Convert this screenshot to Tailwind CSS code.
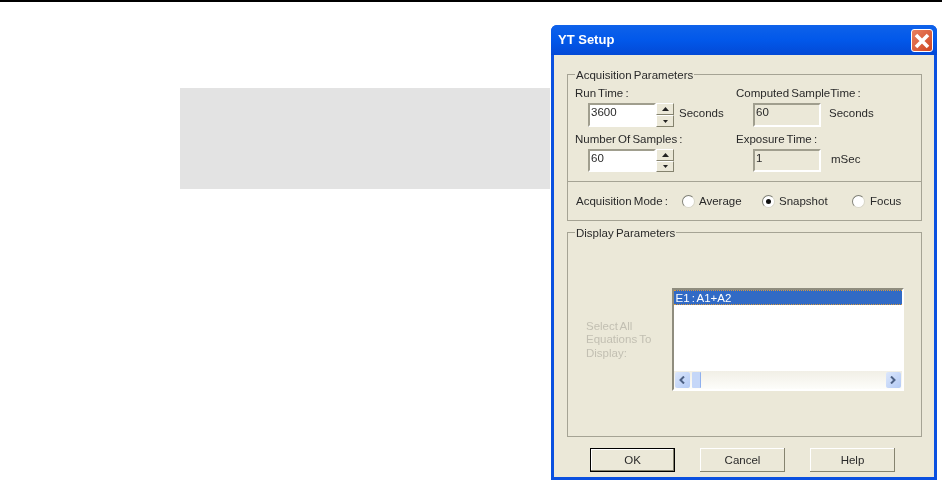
<!DOCTYPE html>
<html lang="en">

<head>
    <meta charset="UTF-8">
    <meta name="viewport" content="width=device-width, initial-scale=1.0">
    <title>YT Setup</title>
    <script src="https://cdn.jsdelivr.net/npm/@tailwindcss/browser@4"></script>
</head>

<body class="bg-white w-[942px] h-[481px] overflow-hidden font-['Liberation_Sans',Arial,sans-serif] text-[11.5px] leading-[14px] text-[#2a2a2a] [word-spacing:-1px]">
    <div class="h-[2px] bg-black"></div>

    <div class="flex">
        <!-- page column with the grey note box -->
        <div class="w-[551px] pl-[180px] pt-[86px]">
            <div class="w-[370px] h-[101px] bg-[#e3e3e3]"></div>
        </div>

        <!-- dialog -->
        <div class="w-[386px] h-[455px] mt-[23px] flex flex-col rounded-t-[6px] overflow-hidden bg-[#0a50e0] blur-[0.4px]">
            <div class="h-[30px] shrink-0 flex items-center justify-between pl-[7px] pr-[4px] bg-gradient-to-b from-[#0f62ea] via-[#0258ea] to-[#0349d6]">
                <span class="font-bold text-[13px] text-white [word-spacing:0]">YT Setup</span>
                <div class="w-[22px] h-[23px] mt-[1px] flex items-center justify-center rounded-[3px] border border-white bg-gradient-to-br from-[#e8805f] to-[#cf4420]">
                    <svg width="18" height="18" viewBox="0 0 18 18">
                        <path d="M3 3 L15 15 M15 3 L3 15" stroke="#fff" stroke-width="3.6" fill="none" />
                    </svg>
                </div>
            </div>

            <div class="flex-1 mx-[3px] mb-[3px] bg-[#ebe8d8] pl-[13px] pt-[19px]">
                <!-- Acquisition Parameters -->
                <div class="relative w-[355px] h-[147px] border border-[#a5a394]">
                    <span class="absolute -top-[7px] left-[7px] px-[1px] bg-[#ebe8d8]">Acquisition Parameters</span>

                    <div class="h-[107px] pl-[7px] pt-[11px] grid grid-cols-[161px_1fr] border-b border-[#a5a394]">
                        <div>
                            <div>Run Time :</div>
                            <div class="flex items-center mt-[3px] ml-[13px]">
                                <div class="w-[68px] h-[24px] pl-[1px] bg-white border-2 border-[#a09e8e] border-r-white border-b-white">3600</div>
                                <div class="w-[18px] h-[24px] flex flex-col">
                                    <div class="h-[12px] flex items-center justify-center bg-[#ebe8d8] border border-[#fff] border-r-[#85836f] border-b-[#85836f]">
                                        <svg width="7" height="4" viewBox="0 0 7 4"><path d="M3.5 0 L7 4 H0 Z" fill="#222" /></svg>
                                    </div>
                                    <div class="h-[12px] flex items-center justify-center bg-[#ebe8d8] border border-[#fff] border-r-[#85836f] border-b-[#85836f]">
                                        <svg width="5" height="3" viewBox="0 0 5 3"><path d="M0 0 H5 L2.5 3 Z" fill="#222" /></svg>
                                    </div>
                                </div>
                                <span class="ml-[5px] mb-[4px]">Seconds</span>
                            </div>
                            <div class="mt-[5px]">Number Of Samples :</div>
                            <div class="flex items-center mt-[3px] ml-[13px]">
                                <div class="w-[68px] h-[23px] pl-[1px] bg-white border-2 border-[#a09e8e] border-r-white border-b-white">60</div>
                                <div class="w-[18px] h-[23px] flex flex-col">
                                    <div class="h-[12px] flex items-center justify-center bg-[#ebe8d8] border border-[#fff] border-r-[#85836f] border-b-[#85836f]">
                                        <svg width="7" height="4" viewBox="0 0 7 4"><path d="M3.5 0 L7 4 H0 Z" fill="#222" /></svg>
                                    </div>
                                    <div class="h-[11px] flex items-center justify-center bg-[#ebe8d8] border border-[#fff] border-r-[#85836f] border-b-[#85836f]">
                                        <svg width="5" height="3" viewBox="0 0 5 3"><path d="M0 0 H5 L2.5 3 Z" fill="#222" /></svg>
                                    </div>
                                </div>
                            </div>
                        </div>
                        <div>
                            <div>Computed SampleTime :</div>
                            <div class="flex items-center mt-[3px] ml-[17px]">
                                <div class="w-[68px] h-[24px] pl-[1px] border-2 border-[#a09e8e] border-r-white border-b-white">60</div>
                                <span class="ml-[8px] mb-[4px]">Seconds</span>
                            </div>
                            <div class="mt-[5px]">Exposure Time :</div>
                            <div class="flex items-center mt-[3px] ml-[17px]">
                                <div class="w-[68px] h-[23px] pl-[1px] border-2 border-[#a09e8e] border-r-white border-b-white">1</div>
                                <span class="ml-[10px] mb-[4px]">mSec</span>
                            </div>
                        </div>
                    </div>

                    <div class="h-[38px] pl-[8px] flex items-center">
                        <span class="w-[106px]">Acquisition Mode :</span>
                        <label class="w-[80px] flex items-center gap-[4px]">
                            <span class="w-[13px] h-[13px] rounded-full bg-white border border-[#7f7f75] border-r-[#d8d6c8] border-b-[#d8d6c8]"></span>
                            Average
                        </label>
                        <label class="w-[90px] flex items-center gap-[4px]">
                            <span class="w-[13px] h-[13px] rounded-full bg-white border border-[#7f7f75] border-r-[#d8d6c8] border-b-[#d8d6c8] flex items-center justify-center">
                                <span class="w-[5px] h-[5px] rounded-full bg-[#111]"></span>
                            </span>
                            Snapshot
                        </label>
                        <label class="flex items-center gap-[5px]">
                            <span class="w-[13px] h-[13px] rounded-full bg-white border border-[#7f7f75] border-r-[#d8d6c8] border-b-[#d8d6c8]"></span>
                            Focus
                        </label>
                    </div>
                </div>

                <!-- Display Parameters -->
                <div class="relative w-[355px] h-[205px] mt-[11px] border border-[#a5a394] pl-[18px] pt-[55px]">
                    <span class="absolute -top-[7px] left-[7px] px-[1px] bg-[#ebe8d8]">Display Parameters</span>
                    <div class="flex items-center">
                        <div class="w-[85.5px] pt-[1px] text-[#c2bfb2] leading-[13.5px]">Select All<br>Equations To<br>Display:</div>
                        <div class="w-[232px] h-[103px] flex flex-col bg-white border-2 border-[#8f8d7e] border-r-white border-b-white">
                            <div class="h-[15px] pl-[2px] flex items-center bg-[#316ac5] text-white border-y border-dotted border-[#d9993a]">E1 : A1+A2</div>
                            <div class="flex-1"></div>
                            <div class="h-[18px] flex items-center justify-between pl-[1px] pr-[1px] bg-gradient-to-b from-[#f1efe6] to-[#fdfdfa]">
                                <div class="flex items-center gap-[2px]">
                                    <div class="w-[15px] h-[16px] flex items-center justify-center rounded-[2px] bg-gradient-to-br from-[#dce7fb] to-[#b3caf5]">
                                        <svg width="6" height="8" viewBox="0 0 6 8"><path d="M5 0.5 L1.5 4 L5 7.5" stroke="#4d6185" stroke-width="2" fill="none" /></svg>
                                    </div>
                                    <div class="w-[9px] h-[16px] rounded-[1px] bg-[#c5d7f8] border-r border-[#8fb0ee]"></div>
                                </div>
                                <div class="w-[15px] h-[16px] flex items-center justify-center rounded-[2px] bg-gradient-to-br from-[#dce7fb] to-[#b3caf5]">
                                    <svg width="6" height="8" viewBox="0 0 6 8"><path d="M1 0.5 L4.5 4 L1 7.5" stroke="#4d6185" stroke-width="2" fill="none" /></svg>
                                </div>
                            </div>
                        </div>
                    </div>
                </div>

                <!-- buttons -->
                <div class="flex gap-[25px] mt-[11px] pl-[23px]">
                    <button class="w-[85px] h-[24px] bg-[#ebe8d8] border border-black text-center shadow-[inset_-1px_-1px_0_#85836f,inset_1px_1px_0_#fff]">OK</button>
                    <button class="w-[85px] h-[24px] bg-[#ebe8d8] text-center shadow-[inset_-1px_-1px_0_#85836f,inset_1px_1px_0_#fff]">Cancel</button>
                    <button class="w-[85px] h-[24px] bg-[#ebe8d8] text-center shadow-[inset_-1px_-1px_0_#85836f,inset_1px_1px_0_#fff]">Help</button>
                </div>
            </div>
        </div>
    </div>
</body>

</html>
